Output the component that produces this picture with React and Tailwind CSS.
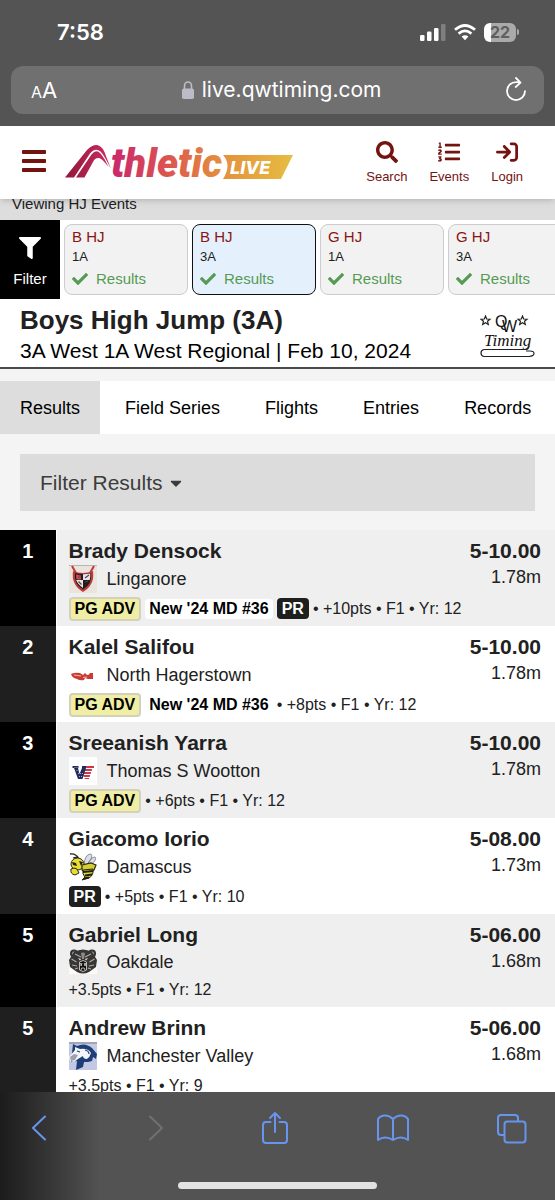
import React from "react";
import { FaCheck, FaFilter, FaListOl, FaSearch, FaCaretDown } from "react-icons/fa";
import { FaArrowRightToBracket } from "react-icons/fa6";

const events = [
  { name: "B HJ", division: "1A" },
  { name: "B HJ", division: "3A", active: true },
  { name: "G HJ", division: "1A" },
  { name: "G HJ", division: "3A" },
];

const tabs = ["Results", "Field Series", "Flights", "Entries", "Records"];

const results = [
  { place: 1, name: "Brady Densock", school: "Linganore", logo: ShieldLogo, mark: "5-10.00", metric: "1.78m", adv: true, rank: "New '24 MD #36", pr: true, info: "• +10pts • F1 • Yr: 12" },
  { place: 2, name: "Kalel Salifou", school: "North Hagerstown", logo: WingLogo, mark: "5-10.00", metric: "1.78m", adv: true, rank: "New '24 MD #36", info: "• +8pts • F1 • Yr: 12" },
  { place: 3, name: "Sreeanish Yarra", school: "Thomas S Wootton", logo: FlagLogo, mark: "5-10.00", metric: "1.78m", adv: true, info: "• +6pts • F1 • Yr: 12" },
  { place: 4, name: "Giacomo Iorio", school: "Damascus", logo: HornetLogo, mark: "5-08.00", metric: "1.73m", pr: true, info: "• +5pts • F1 • Yr: 10" },
  { place: 5, name: "Gabriel Long", school: "Oakdale", logo: BearLogo, mark: "5-06.00", metric: "1.68m", info: "+3.5pts • F1 • Yr: 12" },
  { place: 5, name: "Andrew Brinn", school: "Manchester Valley", logo: MustangLogo, mark: "5-06.00", metric: "1.68m", info: "+3.5pts • F1 • Yr: 9" },
];

function ShieldLogo() {
  return (
    <svg width="28" height="28" viewBox="0 0 28 28" aria-hidden="true">
      <rect width="28" height="28" fill="#e9e4dc" />
      <path d="M0 .5h28" stroke="#b9b4ae" />
      <path d="M3 1l4 7M25 1l-4 7" stroke="#c2393c" strokeWidth="2" />
      <path d="M4 6q10 4 20 0 2 14-10 21Q2 20 4 6z" fill="#c2393c" />
      <path d="M6 8q8 2 16 0 1.500 11-8 16.500Q4.500 19 6 8z" fill="#221d1e" />
      <path d="M14 9.300q4 0 7.300-.7.200 3.500-.6 6.400H14zM7.200 15H14v8q-5.500-4-6.800-8z" fill="#e8e4e6" />
      <path d="M7 9.500l5 1v4H7.500z" fill="#cf4a4d" />
      <path d="M16 13l4-3M9.500 16.500l3 3M9 12h3M16 17l3-1" stroke="#55484a" strokeWidth="1.200" />
    </svg>
  );
}

function WingLogo() {
  return (
    <svg width="28" height="28" viewBox="0 0 28 28" aria-hidden="true">
      <path d="M2 13q4-2 9-1l3 2 2-2q3 4 5 0l3 0v6h-5l-3-1-1 2q-4 1-7-1-5-1-6-5z" fill="#cb3b35" />
      <path d="M5 14l7 1M14 16.500l4-.5" stroke="#f0b7ac" strokeWidth="1" />
    </svg>
  );
}

function FlagLogo() {
  return (
    <svg width="28" height="28" viewBox="0 0 28 28" aria-hidden="true">
      <rect width="28" height="28" fill="#fff" />
      <path d="M14 9h11v2h-1.500L20 22h-4l-3-6z" fill="#c83b46" />
      <path d="M14 11.500h11M15 14.500h9M14.500 17.500h8M15 20.500h6" stroke="#fff" strokeWidth="1" />
      <path d="M3.500 9h6v2H9l1.500 6L13 11V9h4v2l-3.500 11H9L5 11H3.500z" fill="#222b60" />
      <path d="M5.500 10.500h3M7.500 13.500h2M9 16.500h5M10 19.500h3" stroke="#bfc5e2" strokeWidth=".8" strokeDasharray="1 1" />
    </svg>
  );
}

function HornetLogo() {
  return (
    <svg width="28" height="28" viewBox="0 0 28 28" aria-hidden="true">
      <path d="M15 11Q16 2 21 1q3 0 1 5l-4 6q4-8 8-8 3 3-7 10z" fill="#dcdde4" stroke="#77798a" strokeWidth=".8" />
      <path d="M1 1q6-1 9 5M4 5q5-2 8 3" stroke="#29271b" strokeWidth="1.300" fill="none" />
      <ellipse cx="8.500" cy="11" rx="6.500" ry="6" fill="#e8dd35" stroke="#333018" />
      <path d="M3 9l4 1 1 3-4-1zM10 8l4 1-2 4z" fill="#222013" />
      <path d="M13 12l9-2 5 2-2 5-8 3-4-3z" fill="#d5ce32" stroke="#2c2916" strokeWidth="1.200" />
      <path d="M2 16q3-2 6 0l2 4-4 2q-5-1-4-6z" fill="#e8dd35" stroke="#2c2916" />
      <path d="M14 17l10-1q1 6-4 9l-7 2 3-3q-3-3-2-7z" fill="#e0d738" stroke="#222013" />
      <path d="M14 19l10-1M16 22.500l7-1M15 25.500l5-1" stroke="#222013" strokeWidth="1.800" />
    </svg>
  );
}

function BearLogo() {
  return (
    <svg width="28" height="25" viewBox="0 0 28 25" aria-hidden="true">
      <path d="M0 14h28v11H0z" fill="#fafafa" />
      <circle cx="5" cy="4.500" r="4" fill="#333" />
      <circle cx="23" cy="4.500" r="4" fill="#333" />
      <circle cx="5" cy="4.500" r="2" fill="#999" />
      <circle cx="23" cy="4.500" r="2" fill="#999" />
      <path d="M5 3q9-5 18 0l5 8-1 7-7 5q-6 3-12 0l-7-5-1-7z" fill="#383635" />
      <path d="M6 5l6 3M22 5l-6 3M2.500 10l5 3M25.500 10l-5 3M3 16l5 1M25 16l-5 1M6 20l3-1M22 20l-3-1" stroke="#aaa" strokeWidth="1.200" />
      <path d="M12 4q2-1 4 0l-1 6h-2z" fill="#8d8a88" />
      <path d="M9 9l3 1-1 1.500zM19 9l-3 1 1 1.500z" fill="#eee" />
      <path d="M10.500 13q3.500-3 7 0v8q-3.500 3-7 0z" fill="#111" stroke="#bdbab8" />
      <path d="M11.500 14l.7 3 .7-3M15.300 14l.7 3 .7-3M12 21l.8-2h2.400l.8 2" stroke="#ddd" strokeWidth=".8" fill="none" />
    </svg>
  );
}

function MustangLogo() {
  return (
    <svg width="28" height="28" viewBox="0 0 28 28" aria-hidden="true">
      <rect width="28" height="28" fill="#c3c9e2" />
      <path d="M0 0h28v2H0z" fill="#a3a5b5" />
      <path d="M4 2l4 2q8-4 15 2l5 6-1 5-3-2-1 4-4 1-4 0-1 5-7 3 1-9-6 1z" fill="#1e3e77" />
      <path d="M6 5l5 2q8-1 11 4-1 4-4 6-4 0-4-3l-5 3-4 3-4-1-1-4 6-7z" fill="#f4f5f9" />
      <path d="M1 15l4-3 4 1-3 5-4 1z" fill="#9da2ae" />
      <path d="M8 9l3 1M16 8q4 1 4 4M19 17l5-3" stroke="#1e3e77" strokeWidth="1.200" fill="none" />
    </svg>
  );
}

function StatusBar() {
  return (
    <div className="flex h-16 items-center justify-between pr-9 pl-[57px] text-white">
      <span className="text-[22px] font-semibold">7:58</span>
      <div className="flex items-center gap-2">
        <svg width="26" height="17" viewBox="0 0 26 17" aria-hidden="true" fill="#fff">
          <rect x="0" y="11" width="4.500" height="6" rx="1.300" />
          <rect x="7" y="7.500" width="4.500" height="9.500" rx="1.300" />
          <rect x="14" y="4" width="4.500" height="13" rx="1.300" />
          <rect x="21" y="0" width="4.500" height="17" rx="1.300" fill="#7f7f7f" />
        </svg>
        <svg width="22" height="17" viewBox="0 0 22 17" aria-hidden="true" fill="none" stroke="#fff" strokeWidth="2.800">
          <path d="M1 5.800Q11-2.800 21 5.800" />
          <path d="M4.600 9.600q6.400-5.400 12.800 0" />
          <path d="M7.600 12.600q3.400-2.600 6.800 0L11 16.200z" fill="#fff" stroke="none" />
        </svg>
        <div className="flex items-center gap-px">
          <div className="flex h-[19px] w-8 items-center justify-center rounded-md bg-linear-to-r from-white from-22% to-[#aaaaaa] to-22% text-base font-bold text-[#5f5f5f]">
            22
          </div>
          <div className="h-1.5 w-0.5 rounded-r-full bg-[#aaaaaa]" />
        </div>
      </div>
    </div>
  );
}

function AddressBar() {
  return (
    <div className="mx-[11px] mt-0.5 mb-3 flex h-12 items-center justify-between rounded-xl bg-[#707070] pr-[18px] pl-5 text-white">
      <button type="button" aria-label="Page settings" className="flex items-baseline">
        <span className="text-base">A</span>
        <span className="text-[22px]">A</span>
      </button>
      <div className="flex items-center gap-2 text-[21px]">
        <svg width="12" height="18" viewBox="0 0 12 18" aria-hidden="true">
          <rect y="7.500" width="12" height="10.500" rx="1.800" fill="#bdbbc8" />
          <path d="M2.500 8V4.800a3.500 3.800 0 0 1 7 0V8" fill="none" stroke="#bdbbc8" strokeWidth="1.600" />
        </svg>
        <span>live.qwtiming.com</span>
      </div>
      <button type="button" aria-label="Reload">
        <svg width="20" height="26" viewBox="0 0 20 26" fill="none" stroke="#fff" strokeWidth="1.800" strokeLinecap="round" strokeLinejoin="round" aria-hidden="true">
          <path d="M14 5.500Q12 5 10 5.100a9 9 0 1 0 9 9M10 1l4.500 4.600-4.800 4.400" />
        </svg>
      </button>
    </div>
  );
}

function BrandLogo() {
  return (
    <a href="#home" aria-label="Athletic Live" className="block">
      <svg width="230" height="40" viewBox="0 0 230 40">
        <defs>
          <linearGradient id="peak" x1="0" x2="48" gradientUnits="userSpaceOnUse">
            <stop offset="0" stopColor="#8e1838" />
            <stop offset="1" stopColor="#cf2d66" />
          </linearGradient>
          <linearGradient id="word" x1="48" x2="228" gradientUnits="userSpaceOnUse">
            <stop offset="0" stopColor="#c9286c" />
            <stop offset=".3" stopColor="#dc5350" />
            <stop offset=".6" stopColor="#e38f3c" />
            <stop offset="1" stopColor="#e6bd41" />
          </linearGradient>
        </defs>
        <path d="M1 34.500L23 7Q29 1 34 2.200Q39 3.500 42 13L47 26Q40 12 36.500 8.500Q31 4 26 10.500L10 34.500z" fill="url(#peak)" />
        <path d="M12 34.500L27.500 11.500Q32 6 36 10Q40 14 44.500 24Q38 15.500 35 15Q31 14.500 29 19L20.500 34.500z" fill="url(#peak)" />
        <path d="M159 12H229L217 36H159Q168 22 159 12z" fill="url(#word)" />
        <text x="47" y="34" fill="url(#word)" className="font-['Roboto'] text-[40px] font-black italic">thletic</text>
        <text x="166" y="31" fill="#fff" className="font-['Inter'] text-[18px] font-extrabold italic">LIVE</text>
      </svg>
    </a>
  );
}

function NavLink({ icon: Icon, label }) {
  return (
    <a href={`#${label.toLowerCase()}`} className="flex flex-col items-center gap-1.5 text-[13px] leading-4">
      <Icon className="size-[22px]" />
      {label}
    </a>
  );
}

function TimingLogo() {
  return (
    <svg width="56" height="46" viewBox="0 0 56 46" aria-label="QW Timing" role="img" fill="none" stroke="#222">
      <path id="star" d="M5.500 4l1.200 3 3.300.2-2.500 2 .8 3.200-2.800-1.700-2.800 1.700.8-3.200-2.500-2 3.300-.2z" strokeWidth="1.200" />
      <use href="#star" x="37" />
      <text x="15" y="15" fill="#111" stroke="none" className="font-['Liberation_Sans'] text-base">Q</text>
      <text x="22" y="20" fill="#111" stroke="none" className="font-['Liberation_Sans'] text-base">W</text>
      <text x="4" y="34" fill="#111" stroke="none" className="font-['Liberation_Serif'] text-[17px] italic">Timing</text>
      <path d="M49 34q-1 3-4 3.500H4q-3 .5-3 3.500t3 3.500h45q5-.5 5-3t-4-2.500h-4" strokeWidth="1.200" />
    </svg>
  );
}

function ResultRow({ row, index }) {
  const odd = index % 2 === 0;
  const Logo = row.logo;
  return (
    <tr className={odd ? "bg-[#efefef]" : "bg-white"}>
      <th scope="row" className={`w-14 border-r border-white pt-[7px] text-center align-top text-xl leading-7 font-bold text-white ${odd ? "bg-black" : "bg-[#1f1f1f]"}`}>
        {row.place}
      </th>
      <td className="pt-[7px] pb-[5px] pl-3 align-top">
        <a href="#athlete" className="block text-[21px] leading-7 font-bold">{row.name}</a>
        <div className="flex items-center gap-2.5 text-lg leading-6">
          <Logo />
          {row.school}
        </div>
        <div className="mt-[3px] flex h-[25px] items-center gap-1 text-base whitespace-nowrap">
          {row.adv && <span className="rounded border-2 border-[#d3d1bd] bg-[#f0eea2] px-1 leading-5 font-bold text-black">PG ADV</span>}
          {row.rank && <span className="rounded bg-white px-1 leading-5 font-bold text-black">{row.rank}</span>}
          {row.pr && <span className="rounded bg-[#1f1f1f] px-[5px] leading-[21px] font-bold text-white">PR</span>}
          <span>{row.info}</span>
        </div>
      </td>
      <td className="pt-[7px] pr-3.5 text-right align-top">
        <div className="text-[21px] leading-7 font-bold">{row.mark}</div>
        <div className="text-lg leading-6">{row.metric}</div>
      </td>
    </tr>
  );
}

function ToolbarButton({ label, children, ...rest }) {
  return (
    <button type="button" aria-label={label} className="flex w-8 justify-center text-[#6794ef] disabled:text-[#717171]" {...rest}>
      {children}
    </button>
  );
}

function BrowserToolbar() {
  const stroke = { stroke: "currentColor", fill: "none", strokeWidth: 2, strokeLinecap: "round", strokeLinejoin: "round", "aria-hidden": true };
  return (
    <div className="shrink-0 bg-linear-to-r from-[#1c1c1c] to-[#535353] to-18%">
      <div className="flex h-[72px] items-center justify-between pr-7 pl-[22px]">
        <ToolbarButton label="Back">
          <svg width="15" height="26" viewBox="0 0 15 26" {...stroke}><path d="M14 1.500L2 13l12 11.500" /></svg>
        </ToolbarButton>
        <ToolbarButton label="Forward" disabled>
          <svg width="15" height="26" viewBox="0 0 15 26" {...stroke}><path d="M1 1.500L13 13 1 24.500" /></svg>
        </ToolbarButton>
        <ToolbarButton label="Share">
          <svg width="26" height="34" viewBox="0 0 26 34" {...stroke}><path d="M8.500 11H4a3 3 0 0 0-3 3v15a3 3 0 0 0 3 3h18a3 3 0 0 0 3-3V14a3 3 0 0 0-3-3h-4.500M13 21V2M8 7l5-5 5 5" /></svg>
        </ToolbarButton>
        <ToolbarButton label="Bookmarks">
          <svg width="32" height="28" viewBox="0 0 32 28" {...stroke}><path d="M16 5Q12 1 7 1.500 3 2 1 5v21q7-5 15 0 8-5 15 0V5q-2-3-6-3.500Q20 1 16 5v21" /></svg>
        </ToolbarButton>
        <ToolbarButton label="Tabs">
          <svg width="31" height="31" viewBox="0 0 31 31" {...stroke}><rect x="8.500" y="8.500" width="21" height="21" rx="3" /><path d="M8 22H5a3 3 0 0 1-3-3V5a3 3 0 0 1 3-3h14a3 3 0 0 1 3 3v3" /></svg>
        </ToolbarButton>
      </div>
      <div className="flex h-9 items-center justify-center pt-[18px] pb-3">
        <div className="h-[7px] w-[36%] rounded-full bg-[#e2e2e2]" />
      </div>
    </div>
  );
}

export default function App() {
  return (
    <div className="flex h-screen flex-col overflow-hidden bg-[#f4f4f4] font-['Liberation_Sans',sans-serif] text-[#212121]">
      <div className="shrink-0 bg-[#545454] font-['Inter',sans-serif]">
        <StatusBar />
        <AddressBar />
      </div>

      <header className="relative z-10 flex h-[73px] shrink-0 items-center justify-between bg-white pr-8 pl-[22px] text-[#731411] shadow-md">
        <div className="flex items-center gap-[18px]">
          <button type="button" aria-label="Menu" className="pb-1">
            <svg width="24" height="22" viewBox="0 0 24 22" fill="currentColor" aria-hidden="true">
              <rect width="24" height="4" rx=".8" />
              <rect y="9" width="24" height="4" rx=".8" />
              <rect y="18" width="24" height="4" rx=".8" />
            </svg>
          </button>
          <BrandLogo />
        </div>
        <nav className="flex gap-[22px]">
          <NavLink icon={FaSearch} label="Search" />
          <NavLink icon={FaListOl} label="Events" />
          <NavLink icon={FaArrowRightToBracket} label="Login" />
        </nav>
      </header>

      <main className="min-h-0 flex-1 overflow-hidden">
        <div className="bg-[#dddddd] px-3 pb-3 text-[15px] leading-[9px]">Viewing HJ Events</div>

        <div className="flex bg-white">
          <button type="button" className="flex w-[60px] shrink-0 flex-col items-center justify-center gap-2.5 bg-black pt-1.5 text-[15px] leading-5 text-white">
            <FaFilter className="size-[22px]" />
            Filter
          </button>
          <div className="flex min-w-0 flex-1 gap-1 overflow-hidden py-1 pl-1">
            {events.map((event) => (
              <a
                key={event.name + event.division}
                href="#event"
                className={`h-[71px] w-[124px] shrink-0 rounded-lg border pt-px pl-[7px] ${event.active ? "border-[#111111] bg-[#e4f1fc]" : "border-[#cccccc] bg-[#f2f2f2]"}`}
              >
                <div className="text-[15px] leading-[22px] text-[#8b1512]">{event.name}</div>
                <div className="text-[13px] leading-[18px]">{event.division}</div>
                <div className="flex items-center gap-2 text-[15px] leading-[26px] text-[#569a55]">
                  <FaCheck className="size-4" />
                  Results
                </div>
              </a>
            ))}
          </div>
        </div>

        <div className="flex items-center justify-between border-b-2 border-[#4a4a4a] bg-white pt-[5px] pr-[19px] pb-0.5 pl-5">
          <div>
            <h1 className="text-[26px] leading-8 font-bold">Boys High Jump (3A)</h1>
            <p className="text-[21px] leading-[29px] text-black">3A West 1A West Regional | Feb 10, 2024</p>
          </div>
          <TimingLogo />
        </div>

        <nav className="mt-3 flex gap-[5px] bg-white text-lg text-black">
          {tabs.map((tab, i) => (
            <a key={tab} href={`#${tab}`} className={`px-5 pt-0.5 leading-[51px] whitespace-nowrap ${i === 0 ? "bg-[#dddddd]" : ""}`}>
              {tab}
            </a>
          ))}
        </nav>

        <button type="button" className="mx-5 mt-5 mb-[19px] flex h-[57px] w-[calc(100%-40px)] items-center gap-1 bg-[#dcdcdc] px-5 text-[21px] text-[#3c3c3c]">
          Filter Results
          <FaCaretDown className="size-[18px]" />
        </button>

        <table className="w-full border-collapse" aria-label="Boys High Jump (3A)">
          <tbody>
            {results.map((row, i) => (
              <ResultRow key={row.name} row={row} index={i} />
            ))}
          </tbody>
        </table>
      </main>

      <BrowserToolbar />
    </div>
  );
}
